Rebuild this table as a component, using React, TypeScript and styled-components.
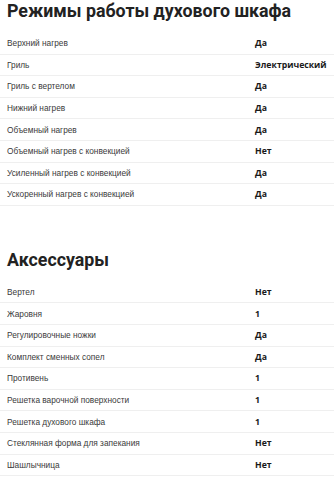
import React from "react";
import styled, { createGlobalStyle } from "styled-components";

const Global = createGlobalStyle`
  html, body { margin: 0; padding: 0; background: #fff; }
  body { font-family: "Liberation Sans", Arial, sans-serif; }
`;

const Page = styled.div`
  width: 334px;
  display: flex;
  flex-direction: column;
`;

const Section = styled.section<{ $first?: boolean }>`
  display: flex;
  flex-direction: column;
  padding-top: ${(p) => (p.$first ? "0px" : "43px")};
`;

const Title = styled.h2`
  margin: 0;
  padding: 0 7px;
  height: 33px;
  font-family: Roboto, sans-serif;
  font-weight: 700;
  font-size: 17.8px;
  line-height: 22px;
  color: #222;
  white-space: nowrap;
`;

const Row = styled.div`
  display: grid;
  grid-template-columns: 248px 1fr;
  align-items: center;
  height: 21.6px;
  box-sizing: border-box;
  padding: 0 7px;
  border-bottom: 1px solid #efefef;
`;

const Label = styled.span`
  font-family: "Liberation Sans", Arial, sans-serif;
  font-size: 8.3px;
  color: #3a3a3a;
  white-space: nowrap;
`;

const Value = styled.span`
  font-family: "Open Sans", sans-serif;
  font-size: 8.7px;
  font-weight: 700;
  color: #1a1a1a;
  white-space: nowrap;
`;

const modes: [string, string][] = [
  ["Верхний нагрев", "Да"],
  ["Гриль", "Электрический"],
  ["Гриль с вертелом", "Да"],
  ["Нижний нагрев", "Да"],
  ["Объемный нагрев", "Да"],
  ["Объемный нагрев с конвекцией", "Нет"],
  ["Усиленный нагрев с конвекцией", "Да"],
  ["Ускоренный нагрев с конвекцией", "Да"],
];

const accessories: [string, string][] = [
  ["Вертел", "Нет"],
  ["Жаровня", "1"],
  ["Регулировочные ножки", "Да"],
  ["Комплект сменных сопел", "Да"],
  ["Противень", "1"],
  ["Решетка варочной поверхности", "1"],
  ["Решетка духового шкафа", "1"],
  ["Стеклянная форма для запекания", "Нет"],
  ["Шашлычница", "Нет"],
];

export default function App() {
  return (
    <Page>
      <Global />
      <Section $first>
        <Title>Режимы работы духового шкафа</Title>
        {modes.map(([l, v]) => (
          <Row key={l}>
            <Label>{l}</Label>
            <Value>{v}</Value>
          </Row>
        ))}
      </Section>
      <Section>
        <Title>Аксессуары</Title>
        {accessories.map(([l, v]) => (
          <Row key={l}>
            <Label>{l}</Label>
            <Value>{v}</Value>
          </Row>
        ))}
      </Section>
    </Page>
  );
}
